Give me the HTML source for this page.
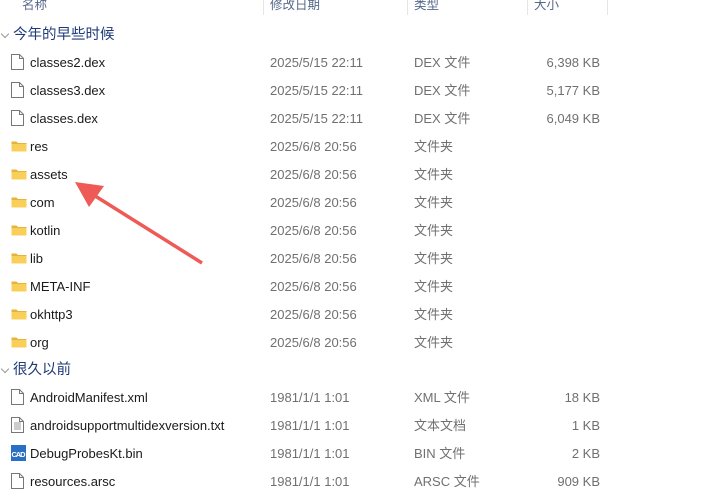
<!DOCTYPE html><html><head><meta charset="utf-8"><style>
body{margin:0;width:713px;height:504px;background:#fff;overflow:hidden;position:relative;font-family:"Liberation Sans","Noto Sans CJK SC",sans-serif;}
.a{position:absolute;white-space:nowrap;font-size:13px;line-height:16px}
.n{left:30px;color:#1a1a1a}
.d{left:270px;color:#707070}
.t{left:414px;color:#707070}
.s{right:113px;color:#707070;text-align:right}
.g{position:absolute;left:13px;font-size:14.5px;color:#1f3a7a;line-height:18px}
.chev{position:absolute;left:2px;width:5px;height:5px;border-right:1px solid #999;border-bottom:1px solid #999;transform:rotate(45deg)}
.h{position:absolute;top:-6px;font-size:12.5px;color:#56688a}
.sep{position:absolute;top:0;width:1px;height:15px;background:#e5e5e5}
.ic{position:absolute;left:11px}
</style></head><body>
<div class="h" style="left:22px">名称</div>
<div class="h" style="left:270px">修改日期</div>
<div class="h" style="left:414px">类型</div>
<div class="h" style="left:534px">大小</div>
<div class="sep" style="left:263px"></div><div class="sep" style="left:407px"></div><div class="sep" style="left:527px"></div><div class="sep" style="left:607px"></div>
<div class="chev" style="top:31px"></div><div class="g" style="top:26px">今年的早些时候</div>
<div class="chev" style="top:366px"></div><div class="g" style="top:361px">很久以前</div>
<div id="rows"></div>
<svg width="713" height="504" style="position:absolute;left:0;top:0">
<line x1="202" y1="263" x2="92" y2="194" stroke="#ee5a55" stroke-width="3.5"/>
<polygon points="75,182 104,186 89,207" fill="#ee5a55"/>
</svg>
<script>
var R=[["f","classes2.dex","2025/5/15 22:11","DEX 文件","6,398 KB",62],
["f","classes3.dex","2025/5/15 22:11","DEX 文件","5,177 KB",90],
["f","classes.dex","2025/5/15 22:11","DEX 文件","6,049 KB",118],
["d","res","2025/6/8 20:56","文件夹","",146],
["d","assets","2025/6/8 20:56","文件夹","",174],
["d","com","2025/6/8 20:56","文件夹","",202],
["d","kotlin","2025/6/8 20:56","文件夹","",230],
["d","lib","2025/6/8 20:56","文件夹","",258],
["d","META-INF","2025/6/8 20:56","文件夹","",286],
["d","okhttp3","2025/6/8 20:56","文件夹","",314],
["d","org","2025/6/8 20:56","文件夹","",342],
["f","AndroidManifest.xml","1981/1/1 1:01","XML 文件","18 KB",397],
["x","androidsupportmultidexversion.txt","1981/1/1 1:01","文本文档","1 KB",425],
["c","DebugProbesKt.bin","1981/1/1 1:01","BIN 文件","2 KB",453],
["f","resources.arsc","1981/1/1 1:01","ARSC 文件","909 KB",481]];
var h="";R.forEach(function(r){var y=r[5],t=y-7,ic;
if(r[0]=="d")ic='<svg class="ic" style="top:'+(y-6)+'px" width="16" height="12"><path d="M0.5 1.5h5l1.5 1.5h8.5v8.5h-15z" fill="#e8b33a"/><rect x="0.5" y="4" width="15" height="7.5" fill="#f8cf58"/></svg>';
else if(r[0]=="c")ic='<svg class="ic" style="top:'+(y-8)+'px" width="15" height="16"><rect width="15" height="16" fill="#2a6fc4"/><text x="0.5" y="12" font-size="7.5" textLength="14" fill="#fff" font-family="Liberation Sans" font-weight="bold">CAD</text></svg>';
else ic='<svg class="ic" style="top:'+(y-8)+'px" width="13" height="16"><path d="M0.5 0.5h8l4 4v11h-12z" fill="#fff" stroke="#777"/><path d="M8.5 0.5v4h4" fill="none" stroke="#777"/>'+(r[0]=="x"?'<path d="M3 6h7M3 8h7M3 10h7M3 12h7" stroke="#999"/>':'')+'</svg>';
h+=ic+'<div class="a n" style="top:'+t+'px">'+r[1]+'</div><div class="a d" style="top:'+t+'px">'+r[2]+'</div><div class="a t" style="top:'+t+'px">'+r[3]+'</div><div class="a s" style="top:'+t+'px">'+r[4]+'</div>';});
document.getElementById("rows").innerHTML=h;
</script>
</body></html>
